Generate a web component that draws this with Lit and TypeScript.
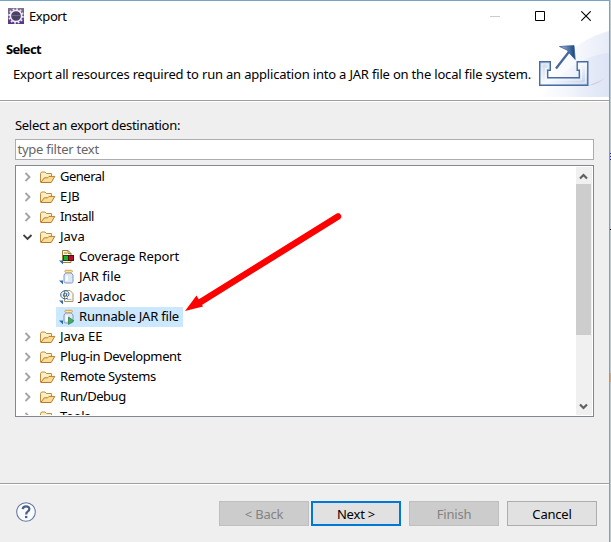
import { LitElement, html, css, svg, nothing } from "lit";
import { customElement, property } from "lit/decorators.js";
import { classMap } from "lit/directives/class-map.js";
import { styleMap } from "lit/directives/style-map.js";

type Kind = "folder" | "coverage" | "jar" | "javadoc" | "runjar";
interface Row { label: string; kind: Kind; open?: boolean; child?: boolean; selected?: boolean; spacing: number }

const rows: Row[] = [
  { label: "General", kind: "folder", spacing: -0.5 },
  { label: "EJB", kind: "folder", spacing: -0.1 },
  { label: "Install", kind: "folder", spacing: -0.5 },
  { label: "Java", kind: "folder", open: true, spacing: 0 },
  { label: "Coverage Report", kind: "coverage", child: true, spacing: -0.15 },
  { label: "JAR file", kind: "jar", child: true, spacing: 0 },
  { label: "Javadoc", kind: "javadoc", child: true, spacing: -0.05 },
  { label: "Runnable JAR file", kind: "runjar", child: true, selected: true, spacing: -0.2 },
  { label: "Java EE", kind: "folder", spacing: 0 },
  { label: "Plug-in Development", kind: "folder", spacing: -0.37 },
  { label: "Remote Systems", kind: "folder", spacing: -0.39 },
  { label: "Run/Debug", kind: "folder", spacing: -0.46 },
  { label: "Tools", kind: "folder", spacing: -0.3 },
];

const corner = svg`<path d="M0 11.5H4V15.5Z" fill="#2b6ca8"/>`;
const jar = svg`
  <path d="M6.7 4L5 6V12.5Q5 14 6.5 14H12.5Q14 14 14 12.5V6L12.3 4Z" fill="#dce7f6" stroke="#8398bf"/>
  <path d="M7.7 6.5V12" stroke="#fff" stroke-width="2.2"/>
  <rect x="5.8" y="1.3" width="7.6" height="2" rx="1" fill="#fff2c6" stroke="#d2a146"/>`;

const art = {
  folder: svg`
    <path d="M.5 13V4.5L1.5 3H5L6.5 4.5H11.5V7" fill="#fff0c4" stroke="#c28a3e"/>
    <path d="M.8 13.5L4.3 8.8H7.6L9 7.4H14.8L11.2 13.5Z" fill="#fadc92" stroke="#b9792c" stroke-linejoin="round"/>`,
  coverage: svg`
    <path d="M3.5 1.5H9L12 4.5V13.5H3.5Z" fill="#fff9df" stroke="#a07c35"/>
    <path d="M9 1.5V4.5H12M5 4H8" fill="none" stroke="#a07c35"/>
    <rect x="4.5" y="6.5" width="5" height="5" fill="#17b72b" stroke="#174b22"/>
    <rect x="9.5" y="6.5" width="5" height="5" fill="#b90f24" stroke="#501018"/>${corner}`,
  jar: svg`${jar}${corner}`,
  javadoc: svg`
    <path d="M5.5 1.5H11L14 4.5V12.5H5.5Z" fill="#fbf8ea" stroke="#a6976c"/>
    <path d="M8 10.5H12.5" stroke="#a9bde0"/>
    <path d="M9 9Q6.5 10.4 3.8 9.3Q1 7.6 1.8 4.6Q3.4 1.3 7 1.7Q10.6 2.8 9.8 6.1Q8.8 8.2 7.4 7.1L7.9 4M7.5 5.2Q6.6 3.5 5 4.3Q3.6 6 4.6 7.3Q6.2 8 7.3 6.3" fill="none" stroke="#2f63a3" stroke-width="1"/>${corner}`,
  runjar: svg`${jar}<path d="M9.5 8V15.5L14.8 11.8Z" fill="#3fae5d" stroke="#247e43" stroke-width=".7"/>${corner}`,
};

@customElement("tree-row")
class TreeRow extends LitElement {
  @property({ attribute: false }) row!: Row;
  static styles = css`
    :host { display: flex; align-items: center; height: 20px; flex: none; padding-left: 6px; color: #000; }
    .twist { width: 10px; height: 10px; flex: none; margin-right: 7px; }
    .item { display: flex; align-items: center; height: 20px; padding-right: 4px; }
    .item.child { margin-left: 16px; padding-left: 3px; }
    .item.selected { background: #cce8ff; }
    .icon { width: 16px; height: 16px; margin-right: 4px; flex: none; }
    .label { line-height: 18px; padding-bottom: 2px; white-space: nowrap; }
  `;
  render() {
    const r = this.row;
    return html`
      <svg class="twist" viewBox="0 0 10 10">
        ${r.child ? nothing : r.open
          ? svg`<path d="M.5 3L4.5 7L8.5 3" fill="none" stroke="#404040" stroke-width="1.9"/>`
          : svg`<path d="M2.5 1L6.5 5L2.5 9" fill="none" stroke="#a6a6a6" stroke-width="1.9"/>`}
      </svg>
      <div class=${classMap({ item: true, child: !!r.child, selected: !!r.selected })}>
        <svg class="icon" viewBox="0 0 16 16">${art[r.kind]}</svg>
        <span class="label" style=${styleMap({ letterSpacing: `${r.spacing}px` })}>${r.label}</span>
      </div>`;
  }
}

@customElement("app-root")
class AppRoot extends LitElement {
  static styles = css`
    * { box-sizing: border-box; }
    :host { display: flex; position: relative; width: 611px; height: 542px; overflow: hidden;
      font: 13px "Noto Sans", "Open Sans", sans-serif; color: #000;
      background: linear-gradient(#b8ccd6 153px, #2a22c0 153px 154px, #b8ccd6 154px 156px, #2a22c0 156px 157px,
        #b8ccd6 157px 159px, #2a22c0 159px 160px, #b8ccd6 160px 229px, #000 229px 230px, #b8ccd6 230px 373px,
        #d0a883 373px 382px, #b8ccd6 382px); }
    .window { width: 610px; display: flex; flex-direction: column; background: #efefef;
      border-top: 1px solid #75a5c2; border-right: 1px solid #75a5c2; }
    .top { background: #fff; height: 99px; flex: none; display: flex; flex-direction: column; }
    .title { height: 29px; display: flex; align-items: center; padding-left: 8px; }
    .title span { margin-left: 5px; flex: 1; letter-spacing: -0.4px; }
    .controls { display: flex; width: 119px; padding-right: 18px; }
    .controls svg + svg { margin-left: 35px; }
    .controls svg:last-child { margin-left: 36px; }
    .banner { flex: 1; display: flex; }
    .text { width: 538px; flex: none; padding: 9px 0 0 6px; white-space: nowrap; }
    .text h1 { margin: 0; font-size: 13px; line-height: 20px; letter-spacing: -0.65px; }
    .text p { margin: 5px 0 0 7px; line-height: 20px; letter-spacing: -0.19px; }
    .art { width: 71px; height: 70px; flex: none; }
    .rule { height: 2px; flex: none; background: #a0a0a0; border-bottom: 1px solid #fff; }
    .body { flex: 1; padding: 14px 15px 0; display: flex; flex-direction: column; }
    .caption { height: 23px; line-height: 18px; letter-spacing: -0.3px; }
    .filter { height: 21px; border: 1px solid #abadb3; background: #fff; color: #666; padding-left: 1.5px; line-height: 18px; letter-spacing: -0.25px; }
    .tree { margin-top: 5px; height: 252px; border: 1px solid #828790; background: #fff; display: flex; padding: 1px; }
    .rows { flex: 1; display: flex; flex-direction: column; overflow: hidden; height: 248px; }
    .scroll { width: 16px; background: #f0f0f0; display: flex; flex-direction: column; height: 248px; }
    .scroll svg { width: 16px; height: 17px; flex: none; }
    .thumb { width: 15px; height: 151px; background: #cdcdcd; }
    .gap { flex: 1; }
    .filter, .tree { width: 579px; }
    .footer { height: 57px; flex: none; display: flex; align-items: flex-start; padding: 16px 12px 0 16px; }
    .help { width: 20px; height: 20px; margin-top: 1px; }
    .buttons { margin-left: auto; display: flex; }
    .btn { width: 90px; height: 25px; border: 1px solid #adadad; background: #e1e1e1; font: inherit; padding: 0;
      line-height: 22px; text-align: center; color: #000; margin-left: 8px; letter-spacing: -0.2px; }
    .btn.off { background: #ccc; border-color: #bfbfbf; color: #838383; }
    .btn.primary { border: 2px solid #0078d7; margin-left: 2px; line-height: 20px; }
    .pointer { position: absolute; left: 180px; top: 205px; width: 170px; height: 110px; }
  `;
  render() {
    return html`
      <div class="window">
        <div class="top">
          <div class="title">
            <svg width="16" height="16" viewBox="0 0 16 16">
              <defs><linearGradient id="eg" x2="0" y2="1"><stop stop-color="#827098"/><stop offset="1" stop-color="#553382"/></linearGradient></defs>
              <rect width="16" height="16" fill="url(#eg)"/>
              <circle cx="8" cy="8" r="6.9" fill="none" stroke="#e9e5ef" stroke-width="1.8" stroke-dasharray="1.8 1.81"/>
              <circle cx="8" cy="8" r="5.6" fill="#4a4168" stroke="#f1eef5" stroke-width="1.5"/>
              <path d="M4 7.5H12" stroke="#77708e" stroke-width=".8"/>
            </svg>
            <span>Export</span>
            <div class="controls">
              <svg width="10" height="10"><path d="M0 5.5H10" stroke="#ccc"/></svg>
              <svg width="10" height="10"><path d="M.5.5H9.5V9.5H.5Z" fill="none" stroke="#000"/></svg>
              <svg width="10" height="10"><path d="M.3.3L9.7 9.7M9.7.3L.3 9.7" stroke="#000" stroke-width="1.1"/></svg>
            </div>
          </div>
          <div class="banner">
            <div class="text">
              <h1>Select</h1>
              <p>Export all resources required to run an application into a JAR file on the local file system.</p>
            </div>
            <svg class="art" viewBox="538 30 71 70">
              <defs>
                <linearGradient id="sw" x1="0" x2="1"><stop stop-color="#e3e8f7" stop-opacity="0"/><stop offset=".4" stop-color="#e3e8f7" stop-opacity=".25"/><stop offset="1" stop-color="#dfe5f6"/></linearGradient>
                <linearGradient id="tray" x2="1" y2="1"><stop stop-color="#c3d4ea"/><stop offset=".5" stop-color="#f5f8fd"/><stop offset="1" stop-color="#bccbe5"/></linearGradient>
                <linearGradient id="hd" x1="0" x2="1"><stop stop-color="#a9c3e0"/><stop offset="1" stop-color="#123f7c"/></linearGradient>
                <linearGradient id="sh" x1="0" x2="1"><stop stop-color="#b7a9b8"/><stop offset="1" stop-color="#dfe5f6"/></linearGradient>
              </defs>
              <path d="M540 97Q562 43 609 31V97Z" fill="url(#sw)" opacity=".75"/>
              <path d="M540 97Q573 56 609 53V97Z" fill="url(#sw)"/>
              <path d="M588 86L607 77Q600 84 588 86Z" fill="url(#sh)" opacity=".6"/>
              <path d="M539.7 61.7H550.3V70.3H547.7V77.7H579.3V70.3H577.2V61.7H587.8V85.3H539.7Z" fill="url(#tray)" stroke="#466ca3" stroke-width="1.4"/>
              <path d="M542 64H548V68.5H545.5V80H581.5V68.5H579.5V64H585.5V83H542Z" fill="none" stroke="#fff" stroke-opacity=".6"/>
              <path d="M556 68.5L570 50.5" stroke="#46699b" stroke-width="2.3"/>
              <path d="M559.5 46.5L574 45.5L575.2 59.5L570.5 54.5L567 50Z" fill="url(#hd)" stroke="#3d6296" stroke-width=".8"/>
            </svg>
          </div>
        </div>
        <div class="rule"></div>
        <div class="body">
          <div class="caption">Select an export destination:</div>
          <div class="filter">type filter text</div>
          <div class="tree">
            <div class="rows">${rows.map(r => html`<tree-row .row=${r}></tree-row>`)}</div>
            <div class="scroll">
              <svg viewBox="0 0 16 17"><path d="M4 11.5L7.5 8L11 11.5" fill="none" stroke="#606060" stroke-width="2.2"/></svg>
              <div class="thumb"></div><div class="gap"></div>
              <svg viewBox="0 0 16 17"><path d="M4 6.5L7.5 10L11 6.5" fill="none" stroke="#606060" stroke-width="2.2"/></svg>
            </div>
          </div>
        </div>
        <div class="rule"></div>
        <div class="footer">
          <svg class="help" viewBox="0 0 21 21">
            <circle cx="10.5" cy="10.5" r="9.8" fill="#fafbfd" stroke="#62789f" stroke-width="1.1"/>
            <path d="M7.1 7.5Q7.2 4.6 10.6 4.6Q14.1 4.6 14 7.4Q14 9 12.2 10.1Q10.7 11 10.7 13" fill="none" stroke="#4c6188" stroke-width="2.4"/>
            <path d="M9.5 14.6H11.9V16.9H9.5Z" fill="#4c6188"/>
          </svg>
          <div class="buttons">
            <button class="btn off">&lt; Back</button>
            <button class="btn primary">Next &gt;</button>
            <button class="btn off">Finish</button>
            <button class="btn">Cancel</button>
          </div>
        </div>
      </div>
      <svg class="pointer" viewBox="180 205 170 110">
        <path d="M338 216.5L199 303" stroke="#f00" stroke-width="6.5" stroke-linecap="round"/>
        <path d="M185 311L196.5 295.5L203 306.5Z" fill="#f00"/>
      </svg>`;
  }
}
